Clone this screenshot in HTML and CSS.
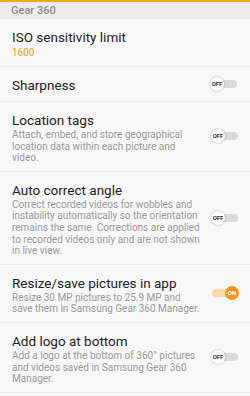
FILE: index.html
```html
<!DOCTYPE html>
<html lang="en">

<head>
  <meta charset="UTF-8">
  <meta name="viewport" content="width=device-width, initial-scale=1.0">
  <link rel="stylesheet" href="styles.css">
</head>

<body>
  <div class="screen">
    <div class="section-head">Gear 360</div>

    <div class="row">
      <div class="text">
        <h1>ISO sensitivity limit</h1>
        <p class="value">1600</p>
      </div>
    </div>

    <div class="row">
      <div class="text">
        <h1>Sharpness</h1>
      </div>
      <div class="switch"><span class="knob">OFF</span></div>
    </div>

    <div class="row">
      <div class="text">
        <h1>Location tags</h1>
        <p>Attach, embed, and store geographical location data within each picture and video.</p>
      </div>
      <div class="switch"><span class="knob">OFF</span></div>
    </div>

    <div class="row">
      <div class="text">
        <h1>Auto correct angle</h1>
        <p>Correct recorded videos for wobbles and instability automatically so the orientation remains the same. Corrections are applied to recorded videos only and are not shown in live view.</p>
      </div>
      <div class="switch"><span class="knob">OFF</span></div>
    </div>

    <div class="row">
      <div class="text">
        <h1>Resize/save pictures in app</h1>
        <p>Resize 30 MP pictures to 25.9 MP and save them in Samsung Gear 360 Manager.</p>
      </div>
      <div class="switch on"><span class="knob">ON</span></div>
    </div>

    <div class="row">
      <div class="text">
        <h1>Add logo at bottom</h1>
        <p>Add a logo at the bottom of 360° pictures and videos saved in Samsung Gear 360 Manager.</p>
      </div>
      <div class="switch"><span class="knob">OFF</span></div>
    </div>
  </div>
</body>

</html>
```

FILE: styles.css
```css
* {
  margin: 0;
  box-sizing: border-box;
}

body {
  width: 250px;
  height: 396px;
  overflow: hidden;
  background: #f8f8f8;
  font-family: Roboto, 'Noto Sans', sans-serif;
}

.screen {
  border-top: 2px solid #f6a623;
}

.section-head {
  height: 17px;
  padding: 1px 11px 0;
  background: #ececec;
  color: #8c8c8c;
  font-size: 11px;
  font-weight: 500;
  line-height: 16px;
}

.row {
  display: flex;
  align-items: center;
  padding: 0 12px;
  border-bottom: 1px solid #ebebeb;
}

.text {
  flex: 1;
  padding: 9px 0 7px;
}

.row h1 {
  font-size: 13.5px;
  font-weight: 400;
  line-height: 18px;
  color: #222;
}

.row p {
  width: 190px;
  font-size: 10px;
  line-height: 11.6px;
  color: #9a9a9a;
}

.row p.value {
  color: #f3a01b;
  font-size: 10px;
  line-height: 13px;
}

.switch {
  flex: none;
  display: flex;
  align-items: center;
  width: 26px;
  height: 8px;
  margin-left: 10px;
  margin-right: 1px;
  border-radius: 4px;
  background: #d9d9d9;
}

.knob {
  width: 14px;
  height: 14px;
  margin-left: -1px;
  border-radius: 50%;
  background: #fff;
  box-shadow: 0 0 2px rgba(0, 0, 0, 0.35);
  color: #333;
  font-size: 6px;
  font-weight: 700;
  line-height: 14px;
  text-align: center;
}

.switch.on {
  justify-content: flex-end;
  background: #fcd9a6;
}

.switch.on .knob {
  margin-left: 0;
  margin-right: -1px;
  background: #f7931e;
  box-shadow: none;
  color: #fff;
}
```
